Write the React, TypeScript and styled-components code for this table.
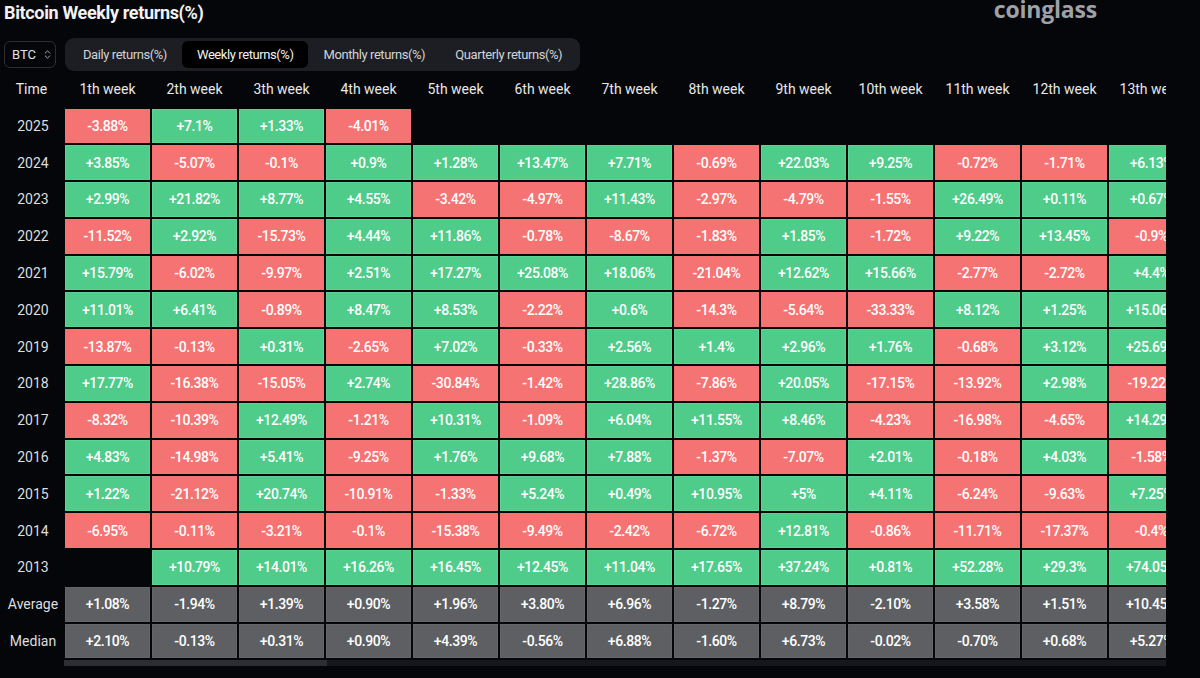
import React from "react";
import styled, { createGlobalStyle } from "styled-components";
import { ChevronsUpDown } from "lucide-react";

const GlobalStyle = createGlobalStyle`
  html, body { margin: 0; padding: 0; background: #05060a; }
  body { font-family: Roboto, "Liberation Sans", sans-serif; color: #e6e6e6; overflow: hidden; }
  * { box-sizing: border-box; }
`;

const Page = styled.div`
  width: 1200px;
  height: 678px;
  background: #05060a;
  display: flex;
  flex-direction: column;
`;

const HeaderBar = styled.div`
  height: 38px;
  display: flex;
  justify-content: space-between;
  align-items: flex-start;
  padding-left: 4px;
`;

const Title = styled.h1`
  margin: 0;
  font-size: 18px;
  line-height: 26px;
  font-weight: 700;
  letter-spacing: -0.35px;
  color: #f2f2f2;
`;

const Logo = styled.div`
  font-family: "Open Sans", sans-serif;
  font-weight: 700;
  font-size: 23px;
  line-height: 22px;
  margin-top: -2px;
  margin-right: 103px;
  color: #9ea2a7;
  letter-spacing: -0.2px;
`;

const Controls = styled.div`
  height: 33px;
  display: flex;
  align-items: center;
  gap: 9px;
  padding-left: 4px;
`;

const Select = styled.div`
  width: 52px;
  height: 27px;
  border: 1px solid #2c2e34;
  border-radius: 6px;
  display: flex;
  align-items: center;
  padding-left: 7px;
  gap: 6px;
  font-size: 13px;
  color: #e2e2e2;
`;

const TabGroup = styled.div`
  height: 33px;
  padding: 3px;
  border-radius: 9px;
  background: #1c1e23;
  display: flex;
`;

const Tab = styled.div<{ $active?: boolean }>`
  height: 27px;
  padding: 0 15px;
  border-radius: 6px;
  display: flex;
  align-items: center;
  font-size: 13px;
  letter-spacing: -0.42px;
  color: ${(p) => (p.$active ? "#f2f2f2" : "#d2d4d8")};
  background: ${(p) => (p.$active ? "#000000" : "transparent")};
`;

const TableClip = styled.div`
  width: 1166px;
  overflow: hidden;
`;

const Grid = styled.div`
  display: grid;
  grid-template-columns: 63px repeat(13, 85px);
  grid-template-rows: 35.5px;
  grid-auto-rows: 34.8px;
  column-gap: 2px;
  row-gap: 2px;
  width: 1194px;
`;

const HeadCell = styled.div`
  display: flex;
  align-items: center;
  justify-content: center;
  font-size: 14px;
  color: #e8e8e8;
  white-space: nowrap;
`;

const RowLabel = styled.div`
  display: flex;
  align-items: center;
  justify-content: center;
  padding-left: 3px;
  font-size: 14px;
  color: #dedede;
  white-space: nowrap;
`;

type Tone = "up" | "down" | "stat" | "none";

const toneBg: Record<Tone, string> = {
  up: "#4fcb8a",
  down: "#f67373",
  stat: "#5e5f62",
  none: "transparent",
};
const toneEdge: Record<Tone, string> = {
  up: "#5ad394",
  down: "#f67373",
  stat: "#646568",
  none: "transparent",
};

const ValueCell = styled.div<{ $tone: Tone }>`
  display: flex;
  align-items: center;
  justify-content: center;
  background: ${(p) => toneBg[p.$tone]};
  box-shadow: inset 0 0 0 1px ${(p) => toneEdge[p.$tone]};
  font-size: 14px;
  font-weight: 500;
  letter-spacing: -0.4px;
  color: #ffffff;
  white-space: nowrap;
`;

const ScrollTrack = styled.div`
  margin-top: 1.5px;
  margin-left: 64px;
  width: 1102px;
  height: 6px;
  background: #16171d;
  display: flex;
`;

const ScrollThumb = styled.div`
  width: 263px;
  height: 100%;
  background: #2d2e33;
`;

const weeks = Array.from({ length: 13 }, (_, i) => `${i + 1}th week`);

const rows: [string, (string | null)[]][] = [
  ["2025", ["-3.88", "+7.1", "+1.33", "-4.01", null, null, null, null, null, null, null, null, null]],
  ["2024", ["+3.85", "-5.07", "-0.1", "+0.9", "+1.28", "+13.47", "+7.71", "-0.69", "+22.03", "+9.25", "-0.72", "-1.71", "+6.13"]],
  ["2023", ["+2.99", "+21.82", "+8.77", "+4.55", "-3.42", "-4.97", "+11.43", "-2.97", "-4.79", "-1.55", "+26.49", "+0.11", "+0.67"]],
  ["2022", ["-11.52", "+2.92", "-15.73", "+4.44", "+11.86", "-0.78", "-8.67", "-1.83", "+1.85", "-1.72", "+9.22", "+13.45", "-0.9"]],
  ["2021", ["+15.79", "-6.02", "-9.97", "+2.51", "+17.27", "+25.08", "+18.06", "-21.04", "+12.62", "+15.66", "-2.77", "-2.72", "+4.4"]],
  ["2020", ["+11.01", "+6.41", "-0.89", "+8.47", "+8.53", "-2.22", "+0.6", "-14.3", "-5.64", "-33.33", "+8.12", "+1.25", "+15.06"]],
  ["2019", ["-13.87", "-0.13", "+0.31", "-2.65", "+7.02", "-0.33", "+2.56", "+1.4", "+2.96", "+1.76", "-0.68", "+3.12", "+25.69"]],
  ["2018", ["+17.77", "-16.38", "-15.05", "+2.74", "-30.84", "-1.42", "+28.86", "-7.86", "+20.05", "-17.15", "-13.92", "+2.98", "-19.22"]],
  ["2017", ["-8.32", "-10.39", "+12.49", "-1.21", "+10.31", "-1.09", "+6.04", "+11.55", "+8.46", "-4.23", "-16.98", "-4.65", "+14.29"]],
  ["2016", ["+4.83", "-14.98", "+5.41", "-9.25", "+1.76", "+9.68", "+7.88", "-1.37", "-7.07", "+2.01", "-0.18", "+4.03", "-1.58"]],
  ["2015", ["+1.22", "-21.12", "+20.74", "-10.91", "-1.33", "+5.24", "+0.49", "+10.95", "+5", "+4.11", "-6.24", "-9.63", "+7.25"]],
  ["2014", ["-6.95", "-0.11", "-3.21", "-0.1", "-15.38", "-9.49", "-2.42", "-6.72", "+12.81", "-0.86", "-11.71", "-17.37", "-0.4"]],
  ["2013", [null, "+10.79", "+14.01", "+16.26", "+16.45", "+12.45", "+11.04", "+17.65", "+37.24", "+0.81", "+52.28", "+29.3", "+74.05"]],
];

const stats: [string, string[]][] = [
  ["Average", ["+1.08", "-1.94", "+1.39", "+0.90", "+1.96", "+3.80", "+6.96", "-1.27", "+8.79", "-2.10", "+3.58", "+1.51", "+10.45"]],
  ["Median", ["+2.10", "-0.13", "+0.31", "+0.90", "+4.39", "-0.56", "+6.88", "-1.60", "+6.73", "-0.02", "-0.70", "+0.68", "+5.27"]],
];

const tabs = ["Daily returns(%)", "Weekly returns(%)", "Monthly returns(%)", "Quarterly returns(%)"];

export default function App() {
  return (
    <Page>
      <GlobalStyle />
      <HeaderBar>
        <Title>Bitcoin Weekly returns(%)</Title>
        <Logo>coinglass</Logo>
      </HeaderBar>
      <Controls>
        <Select>
          BTC
          <ChevronsUpDown size={11} color="#b5b7bb" strokeWidth={2} />
        </Select>
        <TabGroup>
          {tabs.map((t) => (
            <Tab key={t} $active={t === "Weekly returns(%)"}>
              {t}
            </Tab>
          ))}
        </TabGroup>
      </Controls>
      <TableClip>
        <Grid>
          <HeadCell>Time</HeadCell>
          {weeks.map((w) => (
            <HeadCell key={w}>{w}</HeadCell>
          ))}
          {rows.map(([year, vals]) => (
            <React.Fragment key={year}>
              <RowLabel>{year}</RowLabel>
              {vals.map((v, i) => (
                <ValueCell key={i} $tone={v === null ? "none" : v.startsWith("-") ? "down" : "up"}>
                  {v === null ? "" : `${v}%`}
                </ValueCell>
              ))}
            </React.Fragment>
          ))}
          {stats.map(([label, vals]) => (
            <React.Fragment key={label}>
              <RowLabel>{label}</RowLabel>
              {vals.map((v, i) => (
                <ValueCell key={i} $tone="stat">
                  {`${v}%`}
                </ValueCell>
              ))}
            </React.Fragment>
          ))}
        </Grid>
      </TableClip>
      <ScrollTrack>
        <ScrollThumb />
      </ScrollTrack>
    </Page>
  );
}
